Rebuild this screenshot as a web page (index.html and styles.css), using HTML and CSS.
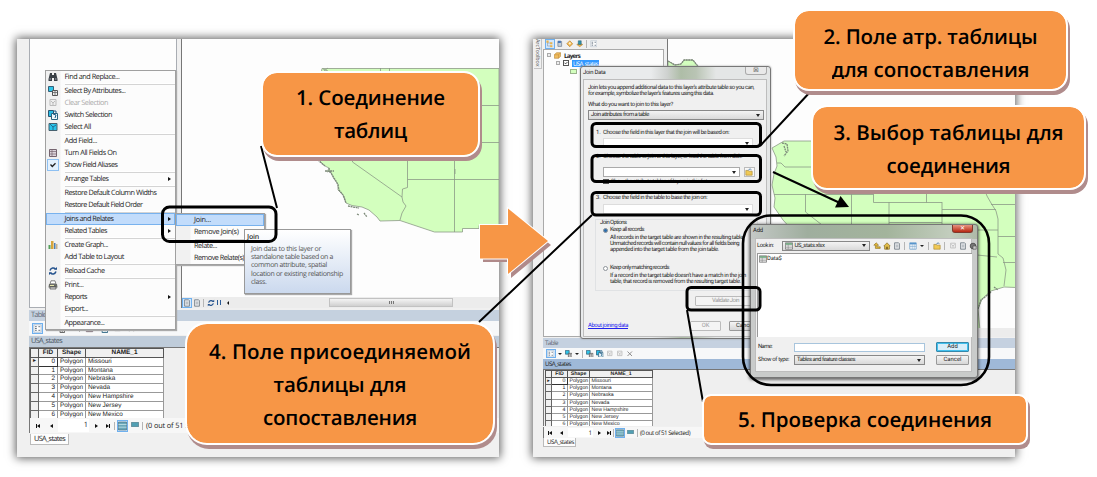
FILE: index.html
```html
<!DOCTYPE html>
<html lang="ru">
<head>
<meta charset="utf-8">
<title>Соединение таблиц</title>
<link rel="stylesheet" href="styles.css">
</head>
<body>
<svg class="defs" width="0" height="0">
  <symbol id="binoc" viewBox="0 0 10 10"><path d="M2 1h2v2h2V1h2l1.500 6v2H6V6H4v3H.5V7z" fill="#3a4046"/><path d="M1.500 7h1.500M7 7h1.500" stroke="#aab"/></symbol>
  <symbol id="selattr" viewBox="0 0 10 10"><path d="M.5.5h5v5h-5z" fill="#2fc5e8" stroke="#355f78"/><path d="M4.500 4.500h5v5h-5z" fill="#eee" stroke="#555"/><path d="M5 6.500h4M7 5v4" stroke="#666" stroke-width=".8"/></symbol>
  <symbol id="clear" viewBox="0 0 10 10"><path d="M2 1.500h6v6H2z" fill="#eee" stroke="#bbb"/><path d="M3 3l2 2 2-2M5 5v2" stroke="#bbb" fill="none"/></symbol>
  <symbol id="switch" viewBox="0 0 10 10"><path d="M.5.5h5v6h-5z" fill="#28bce5" stroke="#28536f"/><path d="M3.500 3.500h6v6h-6z" fill="#eef8fb" stroke="#28627f"/><path d="M5 4l3 1-1 3M6 1h2v2" fill="none" stroke="#195a87"/></symbol>
  <symbol id="selall" viewBox="0 0 10 10"><path d="M1 1.500h8v7H1z" fill="#27c3ea" stroke="#46606e"/><path d="M2 2l3 3 3-2M5 5v3" stroke="#257" fill="none" stroke-width=".8"/></symbol>
  <symbol id="grid" viewBox="0 0 10 10"><path d="M1.500 1.500h7v7h-7z" fill="#ddd5dc" stroke="#75646f"/><path d="M2 3.500h6M2 6h6M4 2v6" stroke="#75646f" stroke-width=".7"/></symbol>
  <symbol id="chart" viewBox="0 0 10 10"><path d="M.5 5h2v4h-2z" fill="#55a05a"/><path d="M3 1h2.500v8H3z" fill="#d6a53c"/><path d="M6 3h1.500v6H6z" fill="#4c7fb5"/><path d="M8 4h1.500v5H8z" fill="#c9b18c"/></symbol>
  <symbol id="reload" viewBox="0 0 10 10"><path d="M2 4.500C3 1.500 6 1.500 7.500 3M8 5.500C7 8.500 4 8.500 2.500 7" fill="none" stroke="#24528d" stroke-width="1.500"/><path d="M6 3.800h3V1zM4 6.200H1V9z" fill="#24528d"/></symbol>
  <symbol id="printer" viewBox="0 0 10 10"><path d="M3 .8h4l1 3H2z" fill="#fff" stroke="#555" stroke-width=".7"/><path d="M1 4h8l.5 3.500h-9z" fill="#6b6d68"/><path d="M2 7h6v2H2z" fill="#ddd" stroke="#444" stroke-width=".7"/><path d="M2 5.500h4" stroke="#e6e4a9"/></symbol>
  <symbol id="check" viewBox="0 0 10 10"><path d="M2.500 4.500L4.300 6.500 7.500 3.300" fill="none" stroke="#222" stroke-width="1.300"/></symbol>
  <symbol id="layers" viewBox="0 0 10 10"><path d="M.5 4l3-3h6v5l-3 3h-6z" fill="#efbd61" stroke="#a8711d" stroke-width=".7"/><path d="M.5 4h6v5M6.500 4l3-3" fill="none" stroke="#b97d28" stroke-width=".6"/></symbol>
  <symbol id="tree" viewBox="0 0 10 10"><path d="M2 2v6h4M2 4h4" fill="none" stroke="#8d97a2" stroke-width=".8"/><path d="M.5.5h3v3h-3zM5.500 3h3v2.500h-3zM5.500 7h3v2.500h-3z" fill="#e8b24c"/></symbol>
  <symbol id="drum" viewBox="0 0 10 10"><path d="M2.500 2h5v6.500h-5z" fill="#c7cfd8" stroke="#5d6d80" stroke-width=".8"/><path d="M2.500 1h4v3h-4z" fill="#4a78b5"/></symbol>
  <symbol id="eye" viewBox="0 0 10 10"><path d="M5 1l4 4-4 4-4-4z" fill="#efb44c" stroke="#a8711d" stroke-width=".7"/><circle cx="5" cy="4.500" r="1.500" fill="#fff3cf"/></symbol>
  <symbol id="pick" viewBox="0 0 10 10"><path d="M1 6l4-2 4 2-4 3z" fill="#efb44c" stroke="#a8711d" stroke-width=".6"/><path d="M3 1h4v5H3z" fill="#2e93a8" stroke="#28536f" stroke-width=".6"/></symbol>
  <symbol id="folder" viewBox="0 0 10 10"><path d="M1 3h3l1 1h4v5H1z" fill="#f0c955" stroke="#a17e26" stroke-width=".7"/><path d="M4 3c1-2 3-2 4-1" fill="none" stroke="#39699c"/></symbol>
  <symbol id="doc" viewBox="0 0 10 10"><path d="M2 1h5l1 1v7H2z" fill="#e6e9ec" stroke="#68737e"/><path d="M3.500 4h3M3.500 6h3" stroke="#78838c" stroke-width=".7"/></symbol>
  <symbol id="cross" viewBox="0 0 10 10"><path d="M2 2l6 6M8 2L2 8" stroke="#8d8d8d" stroke-width="1.300"/></symbol>
  <symbol id="rows" viewBox="0 0 10 10" preserveAspectRatio="none"><path d="M.5 1h9v8h-9z" fill="#6aa8ba" stroke="#40616c" stroke-width=".6"/><path d="M.5 3.500h9M.5 6.200h9" stroke="#d6eef2" stroke-width=".7"/></symbol>
  <symbol id="bluerow" viewBox="0 0 10 10" preserveAspectRatio="none"><path d="M.5.5h9v9h-9z" fill="#519fb3" stroke="#40616c" stroke-width=".8"/></symbol>
  <symbol id="props" viewBox="0 0 10 10"><path d="M1 1h8v8H1z" fill="#fff" stroke="#9ab" stroke-width=".6"/><path d="M2.200 3h2M2.200 5h2M2.200 7h2M6 3h2M6 7h2" stroke="#456" stroke-width=".9"/></symbol>
  <symbol id="list" viewBox="0 0 10 10"><path d="M1 1h8v8H1z" fill="#fff" stroke="#6ea0c9"/><path d="M1 2h8" stroke="#5594cd" stroke-width="2"/><path d="M4 2v7M6.500 2v7M1 5.500h8" stroke="#6ea0c9" stroke-width=".7"/></symbol>
  <symbol id="up" viewBox="0 0 10 10"><path d="M4 1L1 4h2v4h6V6H5V4h2z" fill="#e3b93b" stroke="#826518" stroke-width=".7"/></symbol>
  <symbol id="home" viewBox="0 0 10 10"><path d="M1 5l4-4 4 4H8v4H2V5z" fill="#e2bd4a" stroke="#7c641f" stroke-width=".8"/><path d="M4 6h2v3H4z" fill="#765e1e"/></symbol>
  <symbol id="globe" viewBox="0 0 10 10"><circle cx="5" cy="5" r="3.500" fill="#777" stroke="#444"/><path d="M5 5h4v4H5z" fill="#ccc" stroke="#444" stroke-width=".7"/></symbol>
  <symbol id="xls" viewBox="0 0 10 10"><path d="M.5 1h9v8h-9z" fill="#f4f4f4" stroke="#555" stroke-width=".8"/><path d="M1 2.500h8" stroke="#3f8f56" stroke-width="1.500"/><path d="M1 5h8M1 7h8M4 3v6" stroke="#777" stroke-width=".6"/></symbol>
</svg>

<main class="stage">
  <section class="panel panel-a">
    <div class="gutter"></div>
    <div class="work">
      <div class="top">
        <div class="toc"></div>
        <div class="mapcol">
          <svg class="map" width="317" height="258" viewBox="182 39 317 258">
            <path class="land" d="M322 68.500H499V225.500H479V228.500H462.500V232H434.500L400 220.500 380 221 377 217 369 210 362 207 352 205.500 346 203 344 196 338 190 338 184 334 179 330 171 327 172 329 168 325 166 320 161 317 157 314 130 316 100z"/>
            <path class="edge" d="M380.500 68v5M389.500 68v5M480 105.500H499M480 142.500H499M407.500 179.500H499M407.500 150V187.500L402.500 189 402 197 403 202 406 206 402 213 400 220M352.500 150V162L402 197M454.500 150V232M455 169v5M323 69l5 2M328 68l-4 3"/>
            <path class="coast" d="M317 157l2 4 6 5M325 171l9 0M329 168l1 5M330 171l4 7 2 3 2 4 1 5 4 5 3 8M348 206l5 1 6 1M357 214l2 1M364 213l3 4"/>
          </svg>
          <div class="mapbar">
            <svg class="ic on"><use href="#doc"/></svg><svg class="ic"><use href="#doc"/></svg><i class="bar"></i><svg class="ic"><use href="#reload"/></svg><b class="pause"></b><b class="tri-l"></b>
            <div class="thumb"><i></i></div>
          </div>
        </div>
      </div>
      <div class="cap1"><span class="t" data-w="15">Table</span></div>
      <div class="tools"><svg class="ic on"><use href="#props"/></svg><b class="drop on"></b><svg class="ic"><use href="#selattr"/></svg><b class="drop"></b><i class="bar"></i><svg class="ic"><use href="#grid"/></svg><svg class="ic"><use href="#switch"/></svg><svg class="ic"><use href="#clear"/></svg><svg class="ic"><use href="#cross"/></svg></div>
      <div class="cap2"><span class="t" data-w="31">USA_states</span></div>
      <div class="gridbox">
        <table class="grid">
          <tr><th class="c0"></th><th class="c1">FID</th><th class="c2">Shape</th><th class="c3">NAME_1</th></tr>
          <tr><td class="h">▸</td><td class="n cur">0</td><td>Polygon</td><td>Missouri</td></tr>
          <tr><td class="h"></td><td class="n">1</td><td>Polygon</td><td>Montana</td></tr>
          <tr><td class="h"></td><td class="n">2</td><td>Polygon</td><td>Nebraska</td></tr>
          <tr><td class="h"></td><td class="n">3</td><td>Polygon</td><td>Nevada</td></tr>
          <tr><td class="h"></td><td class="n">4</td><td>Polygon</td><td>New Hampshire</td></tr>
          <tr><td class="h"></td><td class="n">5</td><td>Polygon</td><td>New Jersey</td></tr>
          <tr><td class="h"></td><td class="n">6</td><td>Polygon</td><td>New Mexico</td></tr>
        </table>
      </div>
      <div class="nav"><b class="first"></b><b class="prev"></b><span class="num">1</span><b class="next"></b><b class="last"></b><i class="bar"></i><svg class="ic big on"><use href="#rows"/></svg><svg class="ic sm"><use href="#bluerow"/></svg><i class="bar b2"></i><span class="t" data-w="69">(0 out of 51 Selected)</span></div>
      <div class="tab"><span class="t" data-w="31">USA_states</span></div>
    </div>

    <div class="menu main-menu">
      <div class="mi"><svg><use href="#binoc"/></svg><span class="t" data-w="55">Find and Replace...</span></div><hr>
      <div class="mi"><svg><use href="#selattr"/></svg><span class="t" data-w="61">Select By Attributes...</span></div>
      <div class="mi off"><svg><use href="#clear"/></svg><span class="t" data-w="43.500">Clear Selection</span></div>
      <div class="mi"><svg><use href="#switch"/></svg><span class="t" data-w="47.500">Switch Selection</span></div>
      <div class="mi"><svg><use href="#selall"/></svg><span class="t" data-w="26.500">Select All</span></div><hr>
      <div class="mi"><svg></svg><span class="t" data-w="32.500">Add Field...</span></div>
      <div class="mi"><svg><use href="#grid"/></svg><span class="t" data-w="52">Turn All Fields On</span></div>
      <div class="mi"><svg class="ck"><use href="#check"/></svg><span class="t" data-w="53">Show Field Aliases</span></div><hr>
      <div class="mi sub"><svg></svg><span class="t" data-w="44">Arrange Tables</span></div><hr>
      <div class="mi"><svg></svg><span class="t" data-w="92">Restore Default Column Widths</span></div>
      <div class="mi"><svg></svg><span class="t" data-w="78">Restore Default Field Order</span></div><hr>
      <div class="mi sub hot"><svg></svg><span class="t" data-w="49">Joins and Relates</span></div>
      <div class="mi sub"><svg></svg><span class="t" data-w="42.500">Related Tables</span></div><hr>
      <div class="mi"><svg><use href="#chart"/></svg><span class="t" data-w="43.500">Create Graph...</span></div>
      <div class="mi"><svg></svg><span class="t" data-w="59.500">Add Table to Layout</span></div><hr>
      <div class="mi"><svg><use href="#reload"/></svg><span class="t" data-w="40">Reload Cache</span></div><hr>
      <div class="mi"><svg><use href="#printer"/></svg><span class="t" data-w="19">Print...</span></div>
      <div class="mi sub"><svg></svg><span class="t" data-w="22.500">Reports</span></div>
      <div class="mi"><svg></svg><span class="t" data-w="23.500">Export...</span></div><hr>
      <div class="mi"><svg></svg><span class="t" data-w="40">Appearance...</span></div>
    </div>
    <div class="menu side-menu">
      <div class="mi hot"><svg></svg><span class="t" data-w="17">Join...</span></div>
      <div class="mi"><svg></svg><span class="t" data-w="44.500">Remove Join(s)</span></div><hr>
      <div class="mi"><svg></svg><span class="t" data-w="23">Relate...</span></div>
      <div class="mi"><svg></svg><span class="t" data-w="50">Remove Relate(s)</span></div>
    </div>
    <div class="tip">
      <span class="t tip-h" data-w="12">Join</span>
      <span class="t" data-w="70">Join data to this layer or</span>
      <span class="t" data-w="82">standalone table based on a</span>
      <span class="t" data-w="76">common attribute, spatial</span>
      <span class="t" data-w="92">location or existing relationship</span>
      <span class="t" data-w="15.500">class.</span>
    </div>
  </section>

  <section class="panel panel-b">
    <div class="gutter"><span>ArcToolbox</span></div>
    <div class="work">
      <div class="top">
        <div class="toccol">
          <div class="toctools"><svg class="ic on"><use href="#tree"/></svg><svg class="ic"><use href="#drum"/></svg><svg class="ic"><use href="#eye"/></svg><svg class="ic"><use href="#pick"/></svg><i class="bar"></i><svg class="ic"><use href="#props"/></svg></div>
          <div class="toc">
            <div class="node n1"><i class="minus"></i><svg><use href="#layers"/></svg><b class="t" data-w="16">Layers</b></div>
            <div class="node n2"><i class="minus"></i><i class="cb"><svg><use href="#check"/></svg></i><span class="selname"><span class="t" data-w="25">USA_states</span></span></div>
            <div class="node n3"><i class="swatch"></i></div>
          </div>
        </div>
        <div class="mapcol">
          <svg class="map" width="348" height="289" viewBox="667 39 348 289">
            <path class="land" d="M667 61l7 4 6-1 3-4 9 0 3 4 8 8-3 6H667z"/>
            <path class="land" d="M771 148l12-7H1015V287.500L1003 287 990 291 981 299 977 309 979 330H960L800 240 782 220 773 207 774 198 771 185 773 174 776 166 775 157z"/>
            <path class="edge" d="M773 194.500H872.500M804.500 194V212L830 232M826.500 190v2M850.500 190V225M872.500 183V202.500H941M888 202V225M925.500 183V202.500M941 202V229.500M941 209.500H995M888 222.500H941M941 230H997M983 188l3 8 4 7 5 8 2 8v35l5 4 3 12-2 16M990 204.500h25M997 236.500h18M976 255l20 2M1002 262.500h13M776 163l4 0 4 4h27"/>
            <path class="coast" d="M781 143l5 1 1 7-4 5M783 146l2 6M667 61l7 4 6-1 3-4 9 0 3 4 8 8M977 309l3-9 4-3 6-5M993 287l4 3"/>
          </svg>
          <div class="mapbar"></div>
        </div>
      </div>
      <div class="cap1"><span class="t" data-w="13">Table</span></div>
      <div class="tools"><svg class="ic on"><use href="#props"/></svg><b class="drop on"></b><svg class="ic"><use href="#selattr"/></svg><b class="drop"></b><i class="bar"></i><svg class="ic"><use href="#selattr"/></svg><svg class="ic"><use href="#switch"/></svg><svg class="ic"><use href="#clear"/></svg><svg class="ic"><use href="#clear"/></svg><svg class="ic"><use href="#cross"/></svg></div>
      <div class="cap2"><span class="t" data-w="26">USA_states</span></div>
      <div class="gridbox">
        <table class="grid">
          <tr><th class="c0"></th><th class="c1">FID</th><th class="c2">Shape</th><th class="c3">NAME_1</th></tr>
          <tr><td class="h">▸</td><td class="n cur">0</td><td>Polygon</td><td>Missouri</td></tr>
          <tr><td class="h"></td><td class="n">1</td><td>Polygon</td><td>Montana</td></tr>
          <tr><td class="h"></td><td class="n">2</td><td>Polygon</td><td>Nebraska</td></tr>
          <tr><td class="h"></td><td class="n">3</td><td>Polygon</td><td>Nevada</td></tr>
          <tr><td class="h"></td><td class="n">4</td><td>Polygon</td><td>New Hampshire</td></tr>
          <tr><td class="h"></td><td class="n">5</td><td>Polygon</td><td>New Jersey</td></tr>
          <tr><td class="h"></td><td class="n">6</td><td>Polygon</td><td>New Mexico</td></tr>
        </table>
      </div>
      <div class="nav"><b class="first"></b><b class="prev"></b><span class="num">1</span><b class="next"></b><b class="last"></b><i class="bar"></i><svg class="ic big on"><use href="#rows"/></svg><svg class="ic sm"><use href="#bluerow"/></svg><i class="bar b2"></i><span class="t" data-w="50">(0 out of 51 Selected)</span></div>
      <div class="tab"><span class="t" data-w="27">USA_states</span></div>
    </div>

    <div class="dlg join">
      <div class="title"><span class="t" data-w="22.500">Join Data</span><span class="x">☒</span></div>
      <div class="body">
        <p class="t" data-w="166">Join lets you append additional data to this layer's attribute table so you can,</p>
        <p class="t" data-w="126">for example, symbolize the layer's features using this data.</p>
        <p class="t q" data-w="85">What do you want to join to this layer?</p>
        <div class="combo grey w176"><span class="t" data-w="58">Join attributes from a table</span></div>
        <div class="step s1"><i>1.</i><span class="t" data-w="126">Choose the field in this layer that the join will be based on:</span></div>
        <div class="combo in w150"></div>
        <div class="step s2"><i>2.</i><span class="t" data-w="139">Choose the table to join to this layer, or load the table from disk:</span></div>
        <div class="pick"><div class="combo w137"></div><div class="fbtn"><svg><use href="#folder"/></svg></div></div>
        <div class="showrow"><i class="cb on"></i><span class="t" data-w="96">Show the attribute tables of layers in this list</span></div>
        <div class="step s3"><i>3.</i><span class="t" data-w="104">Choose the field in the table to base the join on:</span></div>
        <div class="combo in w150"></div>
        <div class="opts">
          <p class="t leg" data-w="26.500">Join Options</p>
          <div class="radio"><i class="sel"></i><span class="t" data-w="34">Keep all records</span></div>
          <p class="t o" data-w="134">All records in the target table are shown in the resulting table.</p>
          <p class="t o" data-w="129">Unmatched records will contain null values for all fields being</p>
          <p class="t o" data-w="109">appended into the target table from the join table.</p>
          <div class="radio r2"><i></i><span class="t" data-w="59">Keep only matching records</span></div>
          <p class="t o" data-w="136">If a record in the target table doesn't have a match in the join</p>
          <p class="t o" data-w="131">table, that record is removed from the resulting target table.</p>
        </div>
        <div class="btn val"><span class="t" data-w="27">Validate Join</span></div>
        <div class="foot"><a class="t" data-w="40">About joining data</a><div class="btn ok">OK</div><div class="btn cn">Cancel</div></div>
      </div>
    </div>

    <div class="dlg add">
      <div class="title"><span class="t" data-w="10">Add</span><span class="close">✕</span></div>
      <div class="body">
        <div class="look"><span class="t" data-w="16.500">Look in:</span><div class="combo grey"><svg><use href="#xls"/></svg><span class="t" data-w="30">US_stats.xlsx</span></div>
          <svg><use href="#up"/></svg><svg><use href="#home"/></svg><svg><use href="#doc"/></svg><i class="bar"></i><svg><use href="#list"/></svg><b class="drop"></b><i class="bar"></i><svg><use href="#folder"/></svg><i class="bar"></i><svg><use href="#clear"/></svg><svg><use href="#doc"/></svg><svg><use href="#globe"/></svg></div>
        <div class="files"><svg><use href="#xls"/></svg><span class="t" data-w="14.500">Data$</span></div>
        <div class="frow"><span class="lab"><span class="t" data-w="14">Name:</span></span><div class="input"></div><div class="btn def">Add</div></div>
        <div class="frow f2"><span class="lab"><span class="t" data-w="31">Show of type:</span></span><div class="combo grey"><span class="t" data-w="58">Tables and feature classes</span></div><div class="btn">Cancel</div></div>
      </div>
    </div>
  </section>

  <svg class="marks" width="1097" height="477" viewBox="0 0 1097 477">
    <path d="M483 229H511V213L551 245 511 278V262H483z" fill="#b08a8a"/>
    <path d="M480 225H508V208.500L548 241 508 274V258.500H480z" fill="#f79646" stroke="#fff" stroke-width="2" paint-order="stroke"/>
    <g fill="none" stroke="#000">
      <rect x="162.500" y="207" width="113.500" height="34.500" rx="7" stroke-width="3"/>
      <rect x="592" y="123.500" width="168.500" height="23" rx="4" stroke-width="3"/>
      <rect x="592" y="155.500" width="168.500" height="26" rx="4" stroke-width="3"/>
      <rect x="592" y="192.500" width="168.500" height="22.500" rx="4" stroke-width="3"/>
      <rect x="687" y="287.500" width="73" height="22.500" rx="4" stroke-width="3"/>
      <rect x="743" y="215.500" width="246" height="169.500" rx="28" stroke-width="2.600"/>
      <path d="M261 146L277 208M811 91L760 146M592 215L479 322M687 310L703 402M773 172L840 203" stroke-width="2"/>
    </g>
    <path d="M849 207L835 207.500 840.500 196z"/>
  </svg>

  <div class="callout k1"><span class="t" data-w="149">1. Соединение</span><span class="t" data-w="73">таблиц</span></div>
  <div class="callout k2"><span class="t" data-w="214">2. Поле атр. таблицы</span><span class="t" data-w="198">для сопоставления</span></div>
  <div class="callout k3"><span class="t" data-w="230">3. Выбор таблицы для</span><span class="t" data-w="124">соединения</span></div>
  <div class="callout k4"><span class="t" data-w="262">4. Поле присоединяемой</span><span class="t" data-w="133">таблицы для</span><span class="t" data-w="154">сопоставления</span></div>
  <div class="callout k5"><span class="t" data-w="254">5. Проверка соединения</span></div>
</main>
<script src="fit.js"></script>
</body>
</html>
```
FILE: styles.css
```css
* { box-sizing: border-box; }
body { margin: 0; background: #fff; font-family: "Open Sans", "Noto Sans", sans-serif; color: #222; text-rendering: geometricPrecision; }
p { margin: 0; }
i { font-style: normal; }
.defs { position: absolute; }
.stage { position: relative; width: 1097px; height: 477px; overflow: hidden; padding: 39px 0 0 17px; display: flex; gap: 34px; align-items: flex-start; }
.t { display: block; width: max-content; white-space: pre; flex: none; }
.panel { position: relative; display: flex; width: 482px; height: 418px; background: #f0f0f0; box-shadow: 0 0 9px 1px rgba(0,0,0,.66); }
.gutter { width: 12px; flex: none; }
.work { flex: 1; min-width: 0; display: flex; flex-direction: column; font-size: 7.300px; line-height: 10px; }
.top { display: flex; flex: none; }
.ic { width: 9px; height: 9px; flex: none; }
.ic.on { background: #d3e7fb; outline: 1px solid #6fb0ee; }
.bar { width: 1px; height: 8px; background: #b5b5b5; flex: none; }
.land { fill: #d3ffbe; stroke: #8b9986; stroke-width: .8; }
.edge { fill: none; stroke: #8b9986; stroke-width: .8; }
.coast { fill: none; stroke: #7d8a7a; stroke-width: 1.300; stroke-dasharray: 2 .6; }
.map { display: block; }
.drop { width: 0; border: 2px solid transparent; border-top: 2.500px solid #222; border-bottom: 0; flex: none; }
.first, .prev, .next, .last, .tri-l { width: 0; height: 0; border: 2.500px solid transparent; flex: none; }
.prev, .first, .tri-l { border-right: 3px solid #111; border-left: 0; }
.next, .last { border-left: 3px solid #111; border-right: 0; }
.first { box-shadow: -1px 0 #111; }
.last { box-shadow: 1px 0 #111; }

/* left window */
.panel-a .top { height: 269px; }
.panel-a .toc { width: 148px; margin-right: 4px; background: #fdfdfd; border: 1px solid #a9adb3; border-top: 0; }
.panel-a .mapcol { width: 318px; border-left: 1px solid #777; background: #fdfdfd; }
.mapbar { display: flex; align-items: center; background: #ececec; }
.panel-a .mapbar { height: 11px; padding-left: 1px; }
.panel-a .mapbar .ic { width: 8px; height: 8px; margin-right: 2px; }
.panel-a .mapbar .bar { margin: 0 3px 0 0; }
.pause { width: 4px; height: 5px; border: solid #2a5a96; border-width: 0 1.500px; margin-left: 0; }
.panel-a .tri-l { margin: 0 100px 0 6px; border-width: 2px 2.500px 2px 0; }
.thumb { width: 124px; height: 9px; background: linear-gradient(#f4f4f4, #d0d0d0); border: 1px solid #c2c2c2; display: flex; align-items: center; justify-content: center; }
.thumb i { width: 5px; height: 3px; background: repeating-linear-gradient(90deg, #777 0 1px, #ddd 1px 2px); }
.panel-a .cap1 { height: 11px; margin-top: 2px; background: #c5d1df; padding: 0 2px; color: #5d6874; }
.panel-a .tools { height: 14px; background: #f7f8f9; display: flex; align-items: center; gap: 5px; padding-left: 4px; }
.panel-a .cap2 { height: 12px; background: #bfccda; padding: 0 2px; border-bottom: 1px solid #777; color: #4c5763; margin-top: 1px; }
.panel-a .gridbox { height: 70px; }
.gridbox { overflow: hidden; border-left: 1px solid #777; flex: none; background: #efefef; }
.grid { border-collapse: collapse; table-layout: fixed; font-family: "Liberation Sans", sans-serif; background: #fff; color: #222; }
.panel-a .grid { width: 134px; font-size: 6.400px; }
.grid th, .grid td { padding: 0 2px; border: 1px solid #999; white-space: nowrap; overflow: hidden; text-align: left; }
.grid th { background: #f0f0f0; text-align: center; border-color: #555; padding: 0; }
.panel-a .grid tr { height: 8.800px; line-height: 7.800px; }
.grid .n { text-align: right; }
.grid .h { background: #f0f0f0; border-color: #666; padding: 0; font-size: 6px; text-align: center; }
.grid .cur { border: 1px solid #333; }
.panel-a .c0 { width: 8px; } .panel-a .c1 { width: 19px; } .panel-a .c2 { width: 28px; } .panel-a .c3 { width: 78px; }
.nav { display: flex; align-items: center; flex: none; background: #f7f7f7; border-left: 1px solid #777; }
.num { background: #fff; text-align: right; flex: none; }
.panel-a .nav { height: 15px; padding-left: 7px; }
.panel-a .nav .prev { margin-left: 10px; }
.panel-a .num { width: 31px; margin-left: 5px; padding-right: 1px; height: 13px; line-height: 13px; }
.panel-a .next { margin-left: 6px; } .panel-a .last { margin-left: 8px; }
.panel-a .nav .bar { margin: 0 3px 0 5px; }
.panel-a .nav .b2 { margin: 0 3px; }
.ic.big { width: 9px; height: 10px; } .ic.sm { width: 8px; height: 5px; margin: 0 0 3px 4px; }
.tab { background: #fdfdfd; border: 1px solid #bbb; border-top: 0; flex: none; }
.panel-a .tab { width: 39px; height: 11px; margin: 1px 0 0 1px; padding-left: 3px; line-height: 10px; }

.menu { position: absolute; background: linear-gradient(90deg, #f1f1f1 14px, #fcfcfc 15px); border: 1px solid #a0a0a0; box-shadow: 1px 1px 1px #aaa; font-size: 7.300px; }
.main-menu { left: 28px; top: 31px; width: 131px; height: 260px; }
.side-menu { left: 158px; top: 174px; width: 90px; height: 52px; }
.mi { position: relative; display: flex; align-items: center; height: 12px; line-height: 12px; padding-left: 2px; }
.mi svg { width: 10px; height: 10px; margin-right: 6.500px; flex: none; }
.mi svg.ck { background: #e4f1fd; outline: 1px solid #8ec0f2; }
.mi.off { color: #aaa; }
.mi.hot { background: #c2dcfb; box-shadow: inset 0 0 0 1px #78b2ee; }
.mi.sub::after { content: ""; margin-left: auto; margin-right: 4px; border: 2px solid transparent; border-left: 3px solid #111; border-right: 0; }
.menu hr { margin: 0 0 0 19px; border: 0; height: 2px; background: linear-gradient(#fff 0 30%, #d4d4d4 30%); }
.side-menu .mi svg { margin-right: 6px; }
.tip { position: absolute; left: 227px; top: 190px; width: 107px; height: 65px; padding: 2px 0 0 6px; font-size: 7px; line-height: 8.200px; color: #555; background: linear-gradient(#fff, #cbd9ee); border: 1px solid #999; box-shadow: 1px 1px 1px #aaa; }
.tip .tip-h { margin: 1px 0 4px -4px; color: #333; font-weight: 600; line-height: 9px; }

/* right window */
.panel-b .gutter { width: 10px; }
.panel-b .gutter span { display: block; writing-mode: vertical-rl; width: 8px; height: 30px; margin-left: 1px; border: 1px solid #c3c3c3; border-top: 0; border-left: 0; font-size: 5.400px; line-height: 7px; color: #555; letter-spacing: -.1px; }
.panel-b .work { font-size: 6.200px; line-height: 9px; }
.panel-b .top { height: 298px; }
.toccol { width: 121px; margin-right: 3px; display: flex; flex-direction: column; }
.toctools { display: flex; height: 10px; gap: 2.500px; align-items: center; padding-left: 3px; }
.toctools .ic { width: 7.500px; height: 7.500px; }
.panel-b .toc { flex: 1; background: #fdfdfd; border: 1px solid #aaa; padding-top: 1px; }
.node { display: flex; align-items: center; height: 8px; gap: 3px; }
.node svg { width: 7px; height: 7px; display: block; }
.n1 { padding-left: 3px; } .n2 { padding-left: 12px; } .n3 { padding-left: 26px; }
.minus { width: 4px; height: 4px; border: 1px solid #aaa; background: #eee; }
.cb { width: 6px; height: 6px; border: 1px solid #555; background: #fff; }
.node .cb svg { width: 6px; height: 6px; margin: -1px; }
.selname { background: #3399ff; color: #fff; height: 7px; line-height: 7px; padding: 0 1px; }
.swatch { width: 7px; height: 5px; background: #d3ffbe; border: 1px solid #9ab38c; margin-top: 1px; }
.panel-b .mapcol { width: 348px; border-left: 1px solid #777; background: #fdfdfd; overflow: hidden; }
.panel-b .mapbar { height: 9px; }
.panel-b .cap1 { height: 10px; margin-top: 1px; background: #c5d1e0; padding-left: 2px; color: #5d6874; }
.panel-b .tools { height: 11px; background: #f7f8f9; display: flex; align-items: center; gap: 3px; padding-left: 4px; }
.panel-b .tools .ic { width: 7.500px; height: 7.500px; }
.panel-b .tools .bar ~ .ic { margin-right: -.5px; }
.panel-b .cap2 { height: 11px; background: #9fb9d8; padding-left: 2px; border-bottom: 1px solid #777; line-height: 10px; }
.panel-b .gridbox { height: 56px; }
.panel-b .grid { width: 108px; font-size: 5.200px; margin-left: 1px; }
.panel-b .grid td { padding: 0 1.500px; }
.panel-b .grid tr { height: 7.150px; line-height: 6px; }
.panel-b .grid .h { font-size: 5px; padding: 0; }
.panel-b .c0 { width: 6px; } .panel-b .c1 { width: 16px; } .panel-b .c2 { width: 22px; } .panel-b .c3 { width: 63px; }
.panel-b .nav { height: 11px; padding-left: 5px; margin-top: 1px; }
.panel-b .nav .prev { margin-left: 8px; }
.panel-b .num { width: 25px; margin-left: 5px; padding-right: 1px; }
.panel-b .next { margin-left: 5px; } .panel-b .last { margin-left: 6px; }
.panel-b .nav .bar { margin: 0 2px 0 3px; }
.panel-b .nav .b2 { margin: 0 2.500px; }
.panel-b .ic.big { width: 8px; height: 8px; } .panel-b .ic.sm { width: 7px; height: 4px; margin: 0 0 2px 3px; }
.panel-b .tab { width: 33px; height: 9px; padding-left: 3px; line-height: 8px; }

.dlg { position: absolute; font-family: Roboto, "Open Sans", sans-serif; font-size: 5.900px; line-height: 6px; border: 1px solid #777; border-radius: 3px; }
.dlg svg { width: 8px; height: 8px; display: block; flex: none; }
.dlg .body { background: #f0f0f0; border: 1px solid #bdbdbd; }
.title { display: flex; justify-content: space-between; }
.join { left: 47px; top: 27px; width: 191px; height: 273px; padding: 0 3px 2px 2px; background: linear-gradient(90deg, #e9ebec 70px, #cfd2d0 86px, #aebda7 100px, #b9c4b4 115px, #e4e6e6 135px); box-shadow: 0 0 2px #999; }
.join .title { height: 12px; line-height: 12px; }
.x { width: 22px; height: 8px; border: 1px solid #aaa; border-top: 0; border-radius: 0 0 3px 3px; text-align: center; line-height: 7px; font-size: 6px; background: #e9e9e9; }
.join .body { height: 258px; padding: 5px 0 0 4px; }
.q { margin: 5px 0 2px; }
.combo { position: relative; height: 10px; background: #fff; border: 1px solid #aaa; display: flex; align-items: center; padding-left: 2px; }
.combo.grey { background: linear-gradient(#f3f3f3, #d9d9d9); border-color: #888; }
.combo::after { content: ""; margin-left: auto; margin-right: 3px; border: 2px solid transparent; border-top: 3px solid #222; border-bottom: 0; }
.combo.in { margin-left: 15px; border-color: #ddd; }
.w176 { width: 176px; } .w150 { width: 150px; } .w137 { width: 137px; }
.step { display: flex; margin-left: 8px; height: 6px; }
.step i { width: 7px; }
.s1 { margin-top: 10px; } .s1 + .combo { margin-top: 2px; }
.s2 { margin-top: 6px; }
.pick { display: flex; margin: 7px 0 0 15px; gap: 4px; }
.fbtn { width: 11px; height: 10px; border: 1px solid #bbb; background: #f8f8f8; }
.showrow { display: flex; gap: 2px; margin: 2px 0 0 15px; height: 6px; color: #444; }
.showrow .cb { height: 5px; }
.s3 { margin-top: 10px; } .s3 + .combo { margin-top: 3px; }
.opts { margin: 5px 0 0 7px; height: 72px; border: 1px solid #e0e2e4; width: 163px; position: relative; padding: 0 0 0 14px; }
.leg { background: #f0f0f0; margin: 0 0 1px -10px; }
.radio { display: flex; align-items: center; gap: 2px; margin-left: -7px; height: 6px; margin-bottom: 2px; }
.radio i { width: 5px; height: 5px; border-radius: 50%; border: 1px solid #8d9399; background: #fff; }
.radio i.sel { background: #2d6fae; }
.r2 { margin-top: 12px; }
.btn { height: 10px; border: 1px solid #999; border-radius: 1px; background: linear-gradient(#f5f5f5, #d6d6d6); display: flex; align-items: center; justify-content: center; }
.val { width: 61px; margin: 5px 0 0 107px; color: #999; background: #f4f4f4; border-color: #bbb; }
.foot { display: flex; align-items: center; margin-top: 15px; overflow: hidden; }
.foot a { color: #22e; text-decoration: underline; margin-right: 62px; }
.ok { width: 31px; color: #999; background: #f4f4f4; border-color: #bbb; margin-right: 8px; flex: none; }
.cn { width: 32px; flex: none; }

.add { left: 217px; top: 185px; width: 228px; height: 154px; padding: 0 5px 5px 4px; background: linear-gradient(90deg, #c4c8c6, #9fae9e 25%, #a3b49c 60%, #c2cdbd 88%, #aebaa8) 0 0 / 100% 14px no-repeat #c9cbca; box-shadow: 0 1px 3px 1px rgba(0,0,0,.55); }
.add .title { height: 13px; line-height: 12px; margin-left: -2px; }
.close { width: 21px; height: 8px; margin-right: -1px; background: linear-gradient(#e59480, #b82712); border: 1px solid #80392d; border-top: 0; border-radius: 0 0 3px 3px; color: #fff; text-align: center; line-height: 7px; font-size: 6px; }
.add .body { height: 134px; padding: 1px 0 0 1px; }
.look { display: flex; align-items: center; height: 11px; gap: 2px; }
.look .combo { width: 88px; margin: 0 1px 0 6px; gap: 2px; flex: none; }
.look .bar { margin: 0 1.500px; }
.look .drop { margin: 0 1px; }
.files { display: flex; gap: 0; height: 84px; width: 215px; background: #fff; border: 1px solid #999; border-bottom: 0; border-right: 0; margin-top: 2px; padding: 1px; }
.files .t { line-height: 8px; }
.frow { display: flex; align-items: center; margin: 5px 0 0 1px; }
.lab { width: 36px; }
.input { width: 131px; height: 9px; background: #fff; border: 1px solid #a8c5dd; }
.frow .combo { width: 131px; }
.frow .btn { width: 33px; margin-left: 11px; }
.f2 { margin-top: 3px; }
.frow .def { box-shadow: inset 0 0 0 1px #42c0ee; border-color: #3688ab; background: #d8eefa; }

/* annotations */
.marks { position: absolute; left: 0; top: 0; }
.callout { position: absolute; display: flex; flex-direction: column; align-items: center; background: #f79646; border: 2.500px solid #fff; background-clip: padding-box; border-radius: 16px; box-shadow: 2px 4px 0 #b08c8c; color: #000; font-weight: 600; font-size: 20.500px; line-height: 33px; }
.k1 { left: 261px; top: 71px; width: 219px; height: 86px; padding-top: 9px; }
.k2 { left: 793px; top: 9px; width: 275px; height: 82px; padding-top: 10px; }
.k2 .t:last-child { height: 25px; overflow: hidden; }
.k3 { left: 811px; top: 105px; width: 275px; height: 85px; padding-top: 10px; }
.k4 { left: 185px; top: 322px; width: 310px; height: 123px; padding-top: 12px; border-radius: 22px; }
.k5 { left: 702px; top: 394px; width: 326px; height: 51px; padding-top: 8px; border-radius: 9px; }
```
FILE: fit.js
```js
// Tightens or opens the tracking of each label so it takes its set width.
document.querySelectorAll('.t[data-w]').forEach(function (el) {
  var want = parseFloat(el.dataset.w);
  var have = el.getBoundingClientRect().width;
  el.style.letterSpacing = ((want - have) / el.textContent.length).toFixed(3) + 'px';
});
```
